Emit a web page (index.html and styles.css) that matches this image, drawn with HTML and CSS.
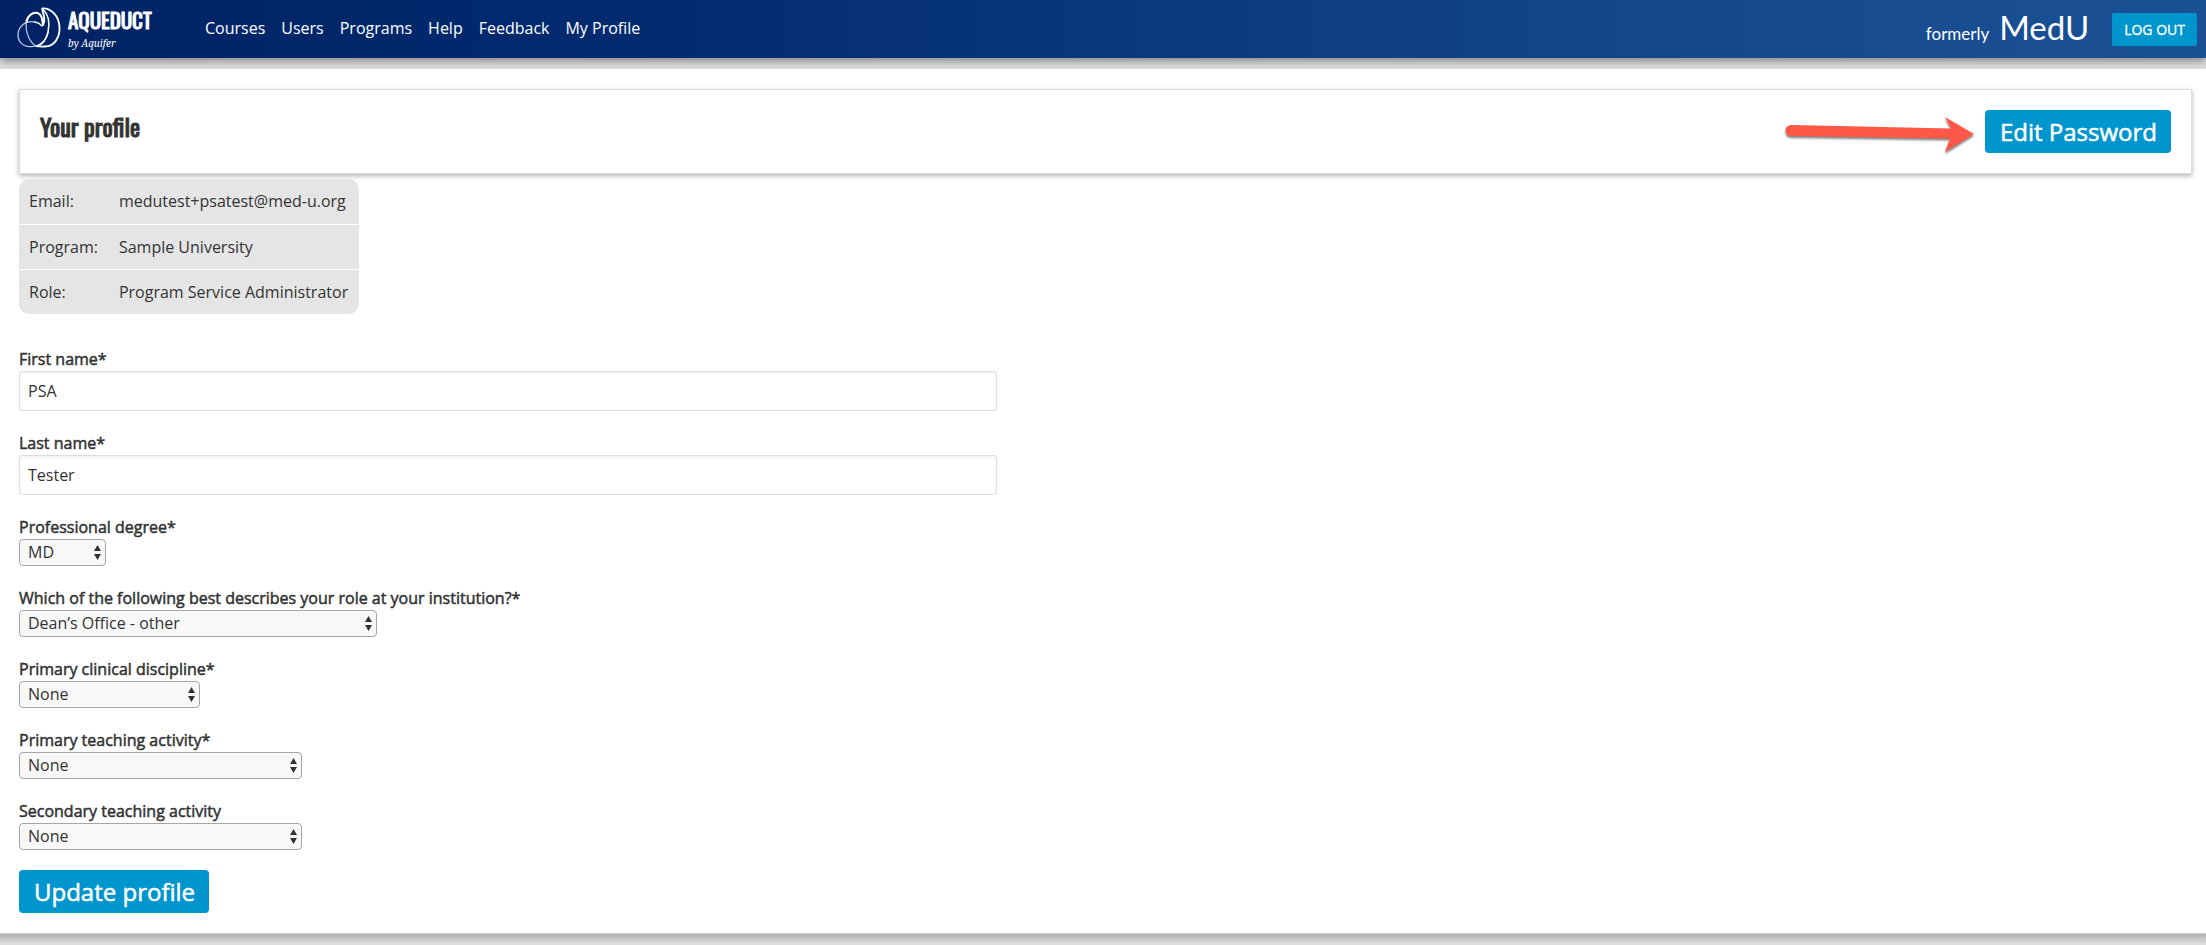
FILE: index.html
```html
<!DOCTYPE html>
<html lang="en">
<head>
<meta charset="utf-8">
<title>Your profile</title>
<link rel="stylesheet" href="styles.css">
</head>
<body>
<header class="topbar">
  <a class="brand" href="#">
    <svg class="brand-mark" viewBox="0 0 44 42" width="44" height="42" aria-hidden="true">
      <g fill="none" stroke="#fff" stroke-linecap="round" stroke-linejoin="round">
        <path d="M18 15C8 13 1 20 1 28c0 7 5 11.500 12 11.700C23 40 30 33 31.500 24" stroke="#b4c4e4" stroke-width="1.300"/>
        <path d="M9.500 15C8 24 12 36 20 39.500" stroke="#b4c4e4" stroke-width="1.200"/>
        <path d="M9.500 15C10 9 16 4.500 20.500 6c3.500 1.200 4.500 4 5.500 12 1-2 1.800-5 1-8.500C26.500 6 25 3.500 25.500 2" stroke-width="2"/>
        <path d="M18 15c3 .5 5 1.500 7 4" stroke-width="1.300"/>
        <path d="M25.500 1.500C34 1 42 9 42.500 20 43 31 37 39.500 28 39.500c-2 0-5 .2-8-.3" stroke-width="1.800"/>
        <path d="M25.500 1.500C31 7 33 16 31 25c-1.500 7-6 12.500-11 14.500" stroke-width="1.500"/>
      </g>
    </svg>
    <span class="brand-text">
      <span class="brand-name">AQUEDUCT</span>
      <span class="brand-by">by Aquifer</span>
    </span>
  </a>
  <nav class="nav">
    <a href="#">Courses</a>
    <a href="#">Users</a>
    <a href="#">Programs</a>
    <a href="#">Help</a>
    <a href="#">Feedback</a>
    <a href="#">My Profile</a>
  </nav>
  <p class="former">formerly <span class="former-name">MedU</span></p>
  <button class="logout" type="button">LOG OUT</button>
</header>

<main class="page">
  <section class="panel">
    <h1 class="title">Your profile</h1>
    <svg class="arrow" viewBox="0 0 194 42" width="194" height="42" aria-hidden="true">
      <path d="M8 8 168 11.500 162 0 191 17 162 35 167 21.500 8 19A5.500 5.500 0 0 1 8 8z" fill="#ff5848"/>
    </svg>
    <button class="button" type="button">Edit Password</button>
  </section>

  <table class="info">
    <tr><th scope="row">Email:</th><td>medutest+psatest@med-u.org</td></tr>
    <tr><th scope="row">Program:</th><td>Sample University</td></tr>
    <tr><th scope="row">Role:</th><td>Program Service Administrator</td></tr>
  </table>

  <form class="form">
    <div class="field">
      <label for="first">First name*</label>
      <input class="text" id="first" type="text" value="PSA">
    </div>
    <div class="field">
      <label for="last">Last name*</label>
      <input class="text" id="last" type="text" value="Tester">
    </div>
    <div class="field">
      <label for="degree">Professional degree*</label>
      <select class="select select-xs" id="degree"><option>MD</option></select>
    </div>
    <div class="field">
      <label for="role">Which of the following best describes your role at your institution?*</label>
      <select class="select select-lg" id="role"><option>Dean’s Office - other</option></select>
    </div>
    <div class="field">
      <label for="discipline">Primary clinical discipline*</label>
      <select class="select select-sm" id="discipline"><option>None</option></select>
    </div>
    <div class="field">
      <label for="primary">Primary teaching activity*</label>
      <select class="select select-md" id="primary"><option>None</option></select>
    </div>
    <div class="field">
      <label for="secondary">Secondary teaching activity</label>
      <select class="select select-md" id="secondary"><option>None</option></select>
    </div>
    <button class="button" type="button">Update profile</button>
  </form>
</main>
<footer class="footer"></footer>
</body>
</html>
```
FILE: styles.css
```css
* {
  box-sizing: border-box;
}

body {
  margin: 0;
  background: #ddd;
  color: #333;
  font-family: "Open Sans", sans-serif;
  font-size: 16px;
  line-height: 24px;
}

button,
input,
select {
  font-family: inherit;
}

.topbar {
  display: flex;
  align-items: center;
  height: 58px;
  padding: 0 9px 0 17px;
  background: linear-gradient(90deg, #002264 0%, #022b70 30%, #164b90 82%, #1a5094 100%);
  box-shadow: 0 3px 8px rgba(0, 0, 0, 0.4);
  color: #fff;
}

.brand {
  display: flex;
  align-items: center;
  gap: 7px;
  width: 188px;
  color: #fff;
  text-decoration: none;
}

.brand-mark {
  margin-bottom: 2px;
}

.brand-text {
  display: flex;
  flex-direction: column;
}

.brand-name {
  font: 21px/32px Oswald, "Roboto Condensed", "Liberation Sans Narrow", sans-serif;
  -webkit-text-stroke: 1px;
}

.brand-by {
  margin-bottom: 4px;
  font: italic 10px/14px "Noto Serif", "DejaVu Serif", serif;
}

.nav {
  display: flex;
  gap: 16px;
  padding-bottom: 2px;
}

.nav a {
  color: #fff;
  text-decoration: none;
}

.former {
  margin: 2px 23px 0 auto;
  font-family: Lato, sans-serif;
  font-size: 17px;
}

.former-name {
  margin-left: 6px;
  font-size: 33px;
}

.logout {
  height: 33px;
  padding: 0 12px;
  border: 0;
  border-radius: 2px;
  background: #0095cc;
  color: #fff;
  font-size: 14px;
  -webkit-text-stroke: 0.3px;
}

.page {
  margin-top: 11px;
  padding: 20px 14px 20px 19px;
  border-bottom: 1px solid #d0d0d0;
  background: #fff;
}

.footer {
  height: 12px;
  background: linear-gradient(#b0b0b0, #ddd 10px);
}

.panel {
  display: flex;
  align-items: center;
  padding: 20px;
  border: 1px solid #ddd;
  box-shadow: 0 2px 5px rgba(0, 0, 0, 0.3);
}

.title {
  margin: 0 auto 11px 0;
  font: 24px/32px Oswald, "Roboto Condensed", "Liberation Sans Narrow", sans-serif;
  -webkit-text-stroke: 1px;
}

.arrow {
  margin: 6px 8px -6px 0;
  filter: drop-shadow(0 2px 1px rgba(0, 0, 0, 0.5));
}

.button {
  height: 43px;
  padding: 0 14px 0 15px;
  border: 0;
  border-radius: 4px;
  background: #0095cc;
  color: #fff;
  font-size: 24px;
  -webkit-text-stroke: 0.5px;
}

.info {
  margin: 5px 0 33px;
  border-collapse: collapse;
  border-radius: 10px;
  overflow: hidden;
  background: #e5e5e5;
}

.info th,
.info td {
  height: 45px;
  padding: 0 11px 0 10px;
  font-weight: normal;
  text-align: left;
}

.info tr + tr {
  border-top: 1px solid #fff;
}

.field {
  display: flex;
  flex-direction: column;
  align-items: flex-start;
  margin-bottom: 20px;
}

.field label {
  -webkit-text-stroke: 0.5px;
}

.text {
  width: 45%;
  height: 40px;
  padding: 0 8px;
  border: 1px solid #ddd;
  border-radius: 3px;
  box-shadow: inset 0 1px 3px #eee;
  color: #333;
  font-size: 16px;
}

.select {
  height: 27px;
  padding: 0 8px 2px;
  appearance: none;
  border: 1px solid #a6a6a6;
  border-radius: 4px;
  background: #f8f8f8 url("data:image/svg+xml,%3Csvg xmlns='http://www.w3.org/2000/svg' width='7' height='15'%3E%3Cpath d='M3.5 0 7 6H0zM3.5 15 7 9H0z' fill='%23333'/%3E%3C/svg%3E") no-repeat right 4px center;
  color: #333;
  font-size: 16px;
}

.select-xs {
  width: 87px;
}

.select-sm {
  width: 181px;
}

.select-md {
  width: 283px;
}

.select-lg {
  width: 358px;
}
```
